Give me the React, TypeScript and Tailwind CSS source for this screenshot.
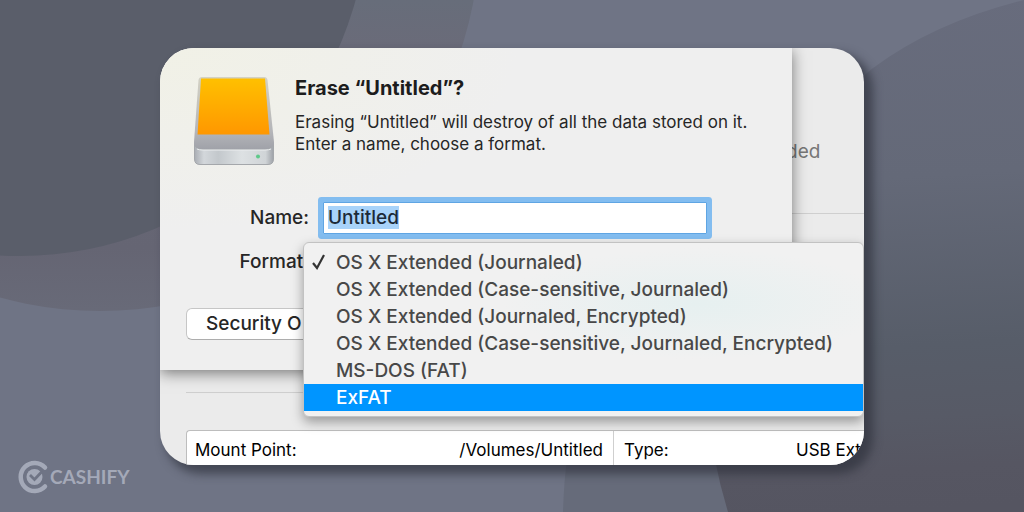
import { useEffect, useRef, useState } from "react";

const formats = [
  "OS X Extended (Journaled)",
  "OS X Extended (Case-sensitive, Journaled)",
  "OS X Extended (Journaled, Encrypted)",
  "OS X Extended (Case-sensitive, Journaled, Encrypted)",
  "MS-DOS (FAT)",
  "ExFAT",
];

function Backdrop() {
  return (
    <svg
      className="absolute inset-0 h-full w-full"
      viewBox="0 0 1024 512"
      preserveAspectRatio="xMidYMid slice"
      aria-hidden="true"
    >
      <defs>
        <linearGradient id="ring" gradientUnits="userSpaceOnUse" x1="0" y1="0" x2="0" y2="310">
          <stop offset="0" stopColor="#676d7a" />
          <stop offset="0.15" stopColor="#6a6b79" />
          <stop offset="0.8" stopColor="#656573" />
          <stop offset="1" stopColor="#686a78" />
        </linearGradient>
        <linearGradient id="side" gradientUnits="userSpaceOnUse" x1="850" y1="0" x2="880" y2="512">
          <stop offset="0" stopColor="#686c7d" />
          <stop offset="0.35" stopColor="#646978" />
          <stop offset="0.68" stopColor="#575d69" />
          <stop offset="0.82" stopColor="#575a66" />
          <stop offset="0.92" stopColor="#565662" />
          <stop offset="1" stopColor="#555561" />
        </linearGradient>
      </defs>
      <rect width="1024" height="512" fill="#6f7485" />
      <circle cx="100" cy="-69" r="380" fill="url(#ring)" />
      <circle cx="20" cy="-92" r="348" fill="#5a5e6a" />
      <path d="M563 512Q564 480 567 460L600 300H800V512Z" fill="#666b7a" />
      <path
        d="M728 512Q720 486 715 460L780 180Q820 110 873 68Q935 22 1024 0V512Z"
        fill="url(#side)"
      />
    </svg>
  );
}

function DriveIcon() {
  return (
    <svg width="82" height="92" viewBox="0 0 82 92" className="shrink-0" aria-hidden="true">
      <defs>
        <linearGradient id="label" x1="0" y1="0" x2="0" y2="1">
          <stop offset="0" stopColor="#ffc000" />
          <stop offset="1" stopColor="#ff9700" />
        </linearGradient>
        <linearGradient id="top" x1="0" y1="0" x2="0" y2="1">
          <stop offset="0" stopColor="#d3d1c4" />
          <stop offset="0.75" stopColor="#b4b5b9" />
          <stop offset="1" stopColor="#9fa1a8" />
        </linearGradient>
        <linearGradient id="front" x1="0" y1="0" x2="1" y2="0">
          <stop offset="0" stopColor="#a9adb3" />
          <stop offset="0.12" stopColor="#d3d7db" />
          <stop offset="0.3" stopColor="#c3c8cc" />
          <stop offset="0.6" stopColor="#dde1e3" />
          <stop offset="0.9" stopColor="#d0d4d7" />
          <stop offset="1" stopColor="#9da1a7" />
        </linearGradient>
      </defs>
      <path d="M9 1H71Q74 1 74.500 4L81 66V74H1V66L5.500 4Q6 1 9 1Z" fill="url(#top)" />
      <path d="M8 2.500H72L76.500 58.500H4.500Z" fill="url(#label)" />
      <path
        d="M1.500 69Q4 73.500 10 73.500H72Q78 73.500 80.500 69V83Q80.500 88.500 75 88.500H7Q1.500 88.500 1.500 83Z"
        fill="url(#front)"
        stroke="#a4a7ab"
      />
      <path d="M4 73Q6 74 10 74H72Q76 74 78 73" fill="none" stroke="#eceeef" />
      <circle cx="65" cy="80.500" r="2" fill="#5fc98a" />
    </svg>
  );
}

function Logo() {
  return (
    <div className="absolute bottom-[18px] left-[17px] flex items-center gap-px text-[#a4a9b8]">
      <svg width="32" height="34" viewBox="0 0 32 34" fill="none" aria-hidden="true">
        <path
          d="M28 7.500A14 14 0 1 0 28 26.500"
          stroke="currentColor"
          strokeWidth="4.500"
          strokeLinecap="round"
        />
        <circle cx="17.500" cy="17" r="8" fill="currentColor" />
        <path d="M13 15L17.500 19.500L25 11.500" stroke="#6f7485" strokeWidth="2.800" />
      </svg>
      <span className="font-[Lato,sans-serif] text-[19px] leading-6 font-bold">CASHIFY</span>
    </div>
  );
}

export default function App() {
  const [name, setName] = useState("Untitled");
  const [format, setFormat] = useState(formats[0]);
  const [active, setActive] = useState("ExFAT");
  const nameRef = useRef<HTMLInputElement>(null);

  useEffect(() => {
    nameRef.current?.focus();
    nameRef.current?.select();
  }, []);

  return (
    <div className="relative flex min-h-screen items-center justify-center overflow-hidden bg-[#6f7485] font-[Inter,sans-serif] text-[#262626]">
      <Backdrop />
      <Logo />

      <main className="relative w-full max-w-[704px] overflow-hidden rounded-[34px] bg-[#ebebeb] shadow-[7px_7px_10px_2px_rgba(45,48,58,0.65)]">
        <div className="flex">
          {/* Erase sheet */}
          <form
            className="relative z-10 w-[632px] bg-[#efefee] bg-radial-[at_0%_0%] from-[#f1f1e6] to-[#efefef] to-40% pt-7 pb-[30px] shadow-[0_3px_14px_rgba(0,0,0,0.5)]"
            onSubmit={(e) => e.preventDefault()}
          >
            <div className="flex gap-5 pl-[33px]">
              <DriveIcon />
              <div>
                <h1 className="text-xl leading-6 font-bold text-[#1c1c1c]">
                  Erase “Untitled”?
                </h1>
                <p className="mt-[11px] text-[17px] leading-[22px]">
                  Erasing “Untitled” will destroy of all the data stored on it.
                  <br />
                  Enter a name, choose a format.
                </p>
              </div>
            </div>

            <div className="mt-[34px] grid grid-cols-[149px_384px] items-center gap-x-[14px] gap-y-3 text-[19px]">
              <label htmlFor="name" className="text-right leading-7 font-medium">
                Name:
              </label>
              <input
                id="name"
                ref={nameRef}
                value={name}
                onChange={(e) => setName(e.target.value)}
                className="h-8 rounded-[1px] border border-[#5fa5e3] bg-white px-1 leading-[26px] font-medium text-[#1c1c1c] ring-5 ring-[#83bdf0] outline-none selection:bg-[#a8d3fa] selection:text-[#1c2a38]"
              />
              <label htmlFor="format" className="text-right leading-8 font-medium">
                Format:
              </label>
              <select
                id="format"
                value={format}
                onChange={(e) => setFormat(e.target.value)}
                className="h-7 rounded border border-[#c4c4c4] bg-white px-2"
              >
                {formats.map((f) => (
                  <option key={f}>{f}</option>
                ))}
              </select>
            </div>

            <button
              type="button"
              className="mt-[30px] ml-[26px] block h-8 w-[180px] rounded-md border border-[#c6c6c6] border-b-[#adadad] bg-white px-[19px] text-left text-[19px] leading-7 font-medium"
            >
              Security O
            </button>
          </form>

          {/* Window behind the sheet */}
          <div className="flex-1">
            <div className="flex h-[166px] items-center border-b border-[#cfcfcf] pt-11">
              <span className="-ml-[6px] text-[19px] text-[#777]">ded</span>
            </div>
          </div>
        </div>

        <div className="pt-[22px] pl-[26px]">
          <hr className="border-[#cfcfcf]" />
          <table className="mt-[37px] w-full table-fixed border-separate border-spacing-0 rounded-tl border-t border-l border-[#bdbdbd] bg-white text-[17px] leading-6 whitespace-nowrap text-black">
            <tbody>
              <tr className="h-[34px]">
                <th className="w-[120px] pt-1 pl-2 text-left font-normal">Mount Point:</th>
                <td className="w-[306px] pt-1 pr-[10px] text-right">/Volumes/Untitled</td>
                <th className="w-[120px] border-l border-[#cfcfcf] pt-1 pl-[10px] text-left font-normal">
                  Type:
                </th>
                <td className="pt-1 pl-[63px]">USB Ext</td>
              </tr>
            </tbody>
          </table>
        </div>

        {/* Open format menu */}
        <ul
          role="menu"
          className="absolute top-[194px] right-0 left-[143px] z-20 rounded-md border border-[#c2c2c2] bg-[#f1f1f1] bg-radial-[at_70%_35%] from-[#e6f0f0] to-[#f1f1f1] to-35% pt-[6px] pb-[5px] text-[19px] font-medium text-[#484848] shadow-[0_5px_12px_rgba(0,0,0,0.35)]"
        >
          {formats.map((f) => (
            <li key={f} role="none">
              <button
                type="button"
                role="menuitemradio"
                aria-checked={f === format}
                onMouseEnter={() => setActive(f)}
                onClick={() => setFormat(f)}
                className={`flex h-[27px] w-full items-center pl-[6px] text-left leading-[27px] whitespace-nowrap ${
                  f === active ? "bg-[#0095ff] text-white" : ""
                }`}
              >
                <span className="w-[26px] shrink-0">
                  {f === format && (
                    <svg width="18" height="18" viewBox="0 0 18 18" aria-hidden="true">
                      <path
                        d="M3 10L7 15L14 2"
                        fill="none"
                        stroke="#333"
                        strokeWidth="2.200"
                      />
                    </svg>
                  )}
                </span>
                {f}
              </button>
            </li>
          ))}
        </ul>
      </main>
    </div>
  );
}
